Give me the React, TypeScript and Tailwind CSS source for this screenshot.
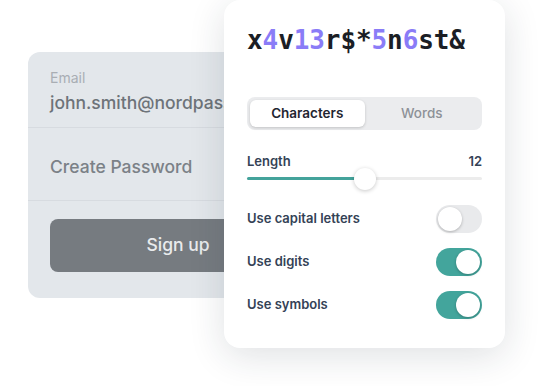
const PASSWORD = [
	{ ch: "x", digit: false },
	{ ch: "4", digit: true },
	{ ch: "v", digit: false },
	{ ch: "1", digit: true },
	{ ch: "3", digit: true },
	{ ch: "r", digit: false },
	{ ch: "$", digit: false },
	{ ch: "*", digit: false },
	{ ch: "5", digit: true },
	{ ch: "n", digit: false },
	{ ch: "6", digit: true },
	{ ch: "s", digit: false },
	{ ch: "t", digit: false },
	{ ch: "&", digit: false },
];

const OPTIONS = [
	{ label: "Use capital letters", on: false },
	{ label: "Use digits", on: true },
	{ label: "Use symbols", on: true },
];

function Toggle({ on }: { on: boolean }) {
	return (
		<span
			className={`flex items-center w-[46px] h-[28px] rounded-full p-[2px] ${
				on ? "bg-[#43a59c] justify-end" : "bg-[#e9eaec] justify-start"
			}`}
		>
			<span className="w-[24px] h-[24px] rounded-full bg-white shadow-[0_1px_3px_rgba(0,0,0,0.25)]" />
		</span>
	);
}

export default function App() {
	return (
		<div className="relative w-[550px] h-[386px] bg-white overflow-hidden font-['Inter',sans-serif]">
			<div className="ml-[28px] mt-[52px] w-[300px] h-[246px] rounded-[12px] bg-[#e3e7eb] flex flex-col">
				<div className="px-[22px] pt-[17px] h-[76px] border-b border-[#d7dbe0]">
					<div className="text-[14px] leading-[18px] text-[#a9aeb4]">Email</div>
					<div className="mt-[4px] text-[17.5px] leading-[24px] font-medium text-[#6d7379] whitespace-nowrap">
						john.smith@nordpass.com
					</div>
				</div>
				<div className="px-[22px] pt-[7px] h-[73px] flex items-center border-b border-[#d7dbe0]">
					<span className="text-[17.5px] font-medium text-[#7b8187]">Create Password</span>
				</div>
				<div className="px-[22px] pt-[18px]">
					<button className="w-full h-[53px] rounded-[8px] bg-[#767b80] text-[17.5px] font-medium text-[#e9ebed]">
						Sign up
					</button>
				</div>
			</div>

			<div className="absolute left-[224px] top-0 w-[281px] h-[348px] rounded-[16px] bg-white shadow-[0_8px_36px_rgba(30,40,60,0.14)] px-[23px] pt-[23px]">
				<div className="font-['DejaVu_Sans_Mono',monospace] font-bold text-[26px] leading-[34px] tracking-[-0.1px] text-[#1b1e25]">
					{PASSWORD.map((p, i) => (
						<span key={i} className={p.digit ? "text-[#8a7cf7]" : ""}>
							{p.ch}
						</span>
					))}
				</div>

				<div className="mt-[40px] h-[33px] rounded-[8px] bg-[#ebecee] p-[3px] flex text-[13.5px] font-semibold">
					<div className="flex-1 rounded-[6px] bg-white shadow-[0_1px_3px_rgba(0,0,0,0.18)] flex items-center justify-center text-[#1f2530]">
						Characters
					</div>
					<div className="flex-1 flex items-center justify-center font-medium text-[#8d9197]">Words</div>
				</div>

				<div className="mt-[22px] flex justify-between text-[13px] font-semibold text-[#344256]">
					<span>Length</span>
					<span>12</span>
				</div>
				<div className="relative mt-[-4px] h-[22px] flex items-center">
					<div className="w-full h-[3px] rounded-full bg-[#ececec]">
						<div className="w-[117px] h-[3px] rounded-full bg-[#44a39b]" />
					</div>
					<span className="absolute left-[107px] top-0 w-[22px] h-[22px] rounded-full bg-white shadow-[0_1px_4px_rgba(0,0,0,0.22)]" />
				</div>

				<div className="mt-[15px] flex flex-col gap-[15px]">
					{OPTIONS.map((o) => (
						<div key={o.label} className="flex items-center justify-between">
							<span className="text-[13px] font-semibold text-[#344256]">{o.label}</span>
							<Toggle on={o.on} />
						</div>
					))}
				</div>
			</div>
		</div>
	);
}
